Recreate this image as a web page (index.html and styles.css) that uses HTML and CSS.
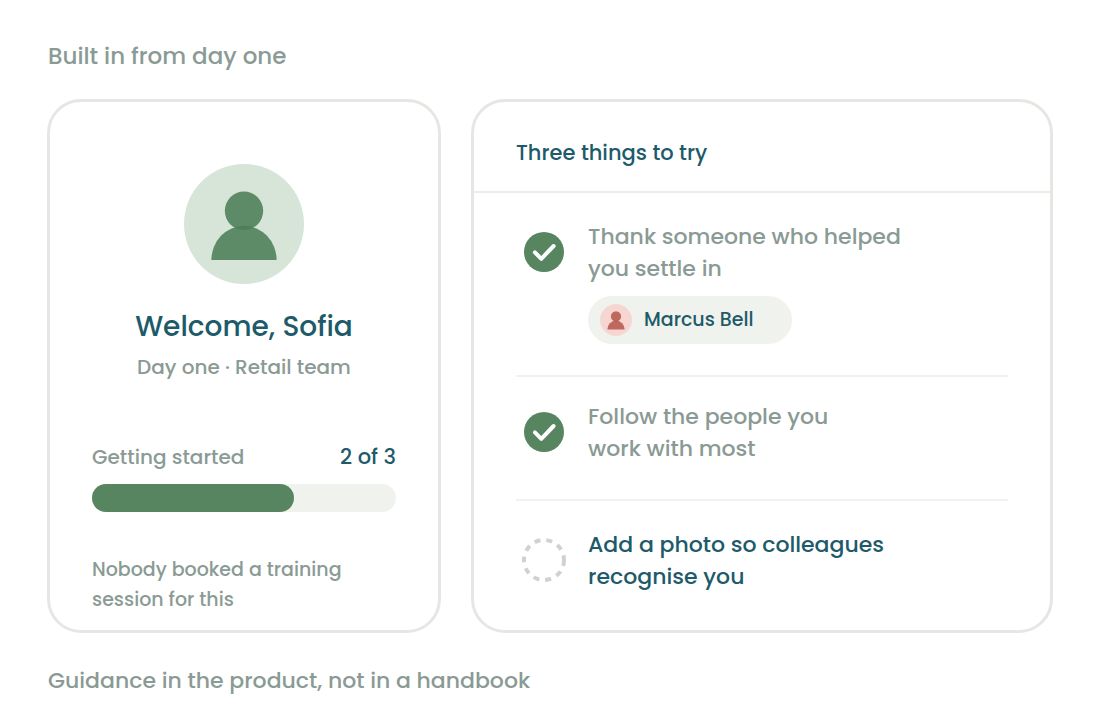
FILE: index.html
```html
<!DOCTYPE html>
<html lang="en">
<head>
  <meta charset="UTF-8" />
  <meta name="viewport" content="width=device-width, initial-scale=1" />
  <title>Built in from day one</title>
  <link rel="stylesheet" href="styles.css">
</head>
<body>

  <h1 class="page-title">Built in from day one</h1>

  <main class="cards">

    <!-- Welcome card -->
    <section class="card welcome">
      <svg class="avatar" viewBox="0 0 120 120" aria-hidden="true">
        <circle class="avatar-bg" cx="60" cy="60" r="60" />
        <circle class="avatar-fg" cx="60" cy="46.8" r="19.2" />
        <path class="avatar-fg" d="M27.4 96a32.6 34.2 0 0 1 65.2 0z" />
      </svg>
      <h2 class="name">Welcome, Sofia</h2>
      <p class="role">Day one · Retail team</p>

      <div class="progress-head">
        <span class="progress-label" id="progressLabel">Getting started</span>
        <span class="progress-count">2 of 3</span>
      </div>
      <div class="track" role="progressbar" aria-labelledby="progressLabel" aria-valuemin="0" aria-valuemax="3" aria-valuenow="2">
        <div class="fill" style="width: 66.5%"></div>
      </div>

      <p class="note">Nobody booked a training<br>session for this</p>
    </section>

    <!-- Checklist card -->
    <section class="card tasks">
      <h2 class="tasks-title">Three things to try</h2>

      <ul class="task-list">
        <li class="task done">
          <span class="tick">
            <input type="checkbox" id="thank" checked>
            <svg viewBox="0 0 44 44" aria-hidden="true">
              <circle class="tick-bg" cx="22" cy="22" r="20" />
              <path class="tick-mark" d="M12.9 22.4l6.4 6.4L31.6 16" />
            </svg>
          </span>
          <div class="task-body">
            <label for="thank">Thank someone who helped<br>you settle in</label>
            <div class="chip">
              <svg class="chip-avatar" viewBox="0 0 120 120" aria-hidden="true">
                <circle class="avatar-bg" cx="60" cy="60" r="60" />
                <circle class="avatar-fg" cx="60" cy="46.8" r="19.2" />
                <path class="avatar-fg" d="M27.4 96a32.6 34.2 0 0 1 65.2 0z" />
              </svg>
              <span>Marcus Bell</span>
            </div>
          </div>
        </li>

        <li class="task done short">
          <span class="tick">
            <input type="checkbox" id="follow" checked>
            <svg viewBox="0 0 44 44" aria-hidden="true">
              <circle class="tick-bg" cx="22" cy="22" r="20" />
              <path class="tick-mark" d="M12.9 22.4l6.4 6.4L31.6 16" />
            </svg>
          </span>
          <div class="task-body">
            <label for="follow">Follow the people you<br>work with most</label>
          </div>
        </li>

        <li class="task">
          <span class="tick">
            <input type="checkbox" id="photo">
            <svg viewBox="0 0 44 44" aria-hidden="true">
              <circle class="tick-empty" cx="22" cy="22" r="20" />
            </svg>
          </span>
          <div class="task-body">
            <label for="photo">Add a photo so colleagues<br>recognise you</label>
          </div>
        </li>
      </ul>
    </section>

  </main>

  <p class="page-foot">Guidance in the product, not in a handbook</p>

</body>
</html>
```
FILE: styles.css
```css
* {
  box-sizing: border-box;
}

body {
  margin: 0;
  padding: 40px 47px 24px;
  background-color: #ffffff;
  font-family: 'Poppins', 'Inter', sans-serif;
  font-weight: 500;
  font-size: 22px;
  line-height: 32px;
  color: #1d5a6a;
}

h1, h2, p, ul {
  margin: 0;
  padding: 0;
  font-weight: 500;
}

.page-title {
  font-size: 23px;
  padding-left: 1px;
  color: #8a9a94;
}

.page-foot {
  margin-top: 32px;
  padding-left: 1px;
  color: #8a9a94;
}

.cards {
  display: grid;
  grid-template-columns: 394fr 582fr;
  gap: 30px;
  margin-top: 27px;
}

.card {
  border: 3px solid #e4e8e3;
  border-radius: 34px;
}

/* Welcome card */
.welcome {
  display: flex;
  flex-direction: column;
  padding: 62px 42px 15px;
}

.avatar {
  width: 120px;
  height: 120px;
  align-self: center;
}

.avatar-bg {
  fill: #d7e5d9;
}

.avatar-fg {
  fill: #4c7d56;
  fill-opacity: 0.87;
}

.name {
  margin-top: 24px;
  font-size: 28px;
  line-height: 38px;
  text-align: center;
}

.role {
  margin-top: 5px;
  font-size: 20px;
  text-align: center;
  color: #8a9a94;
}

.progress-head {
  display: flex;
  justify-content: space-between;
  margin-top: 58px;
}

.progress-label {
  font-size: 20px;
  color: #8a9a94;
}

.progress-count {
  font-size: 21px;
}

.track {
  height: 28px;
  margin-top: 11px;
  border-radius: 14px;
  background-color: #f0f2ed;
}

.fill {
  height: 100%;
  border-radius: 14px;
  background-color: #578560;
}

.note {
  margin-top: 43px;
  font-size: 19px;
  line-height: 30px;
  color: #8a9a94;
}

/* Checklist card */
.tasks-title {
  padding: 35px 42px 22px;
  border-bottom: 2px solid #ebeee9;
  font-size: 21px;
  line-height: 32px;
}

.task-list {
  padding: 0 42px;
  list-style: none;
}

.task {
  display: flex;
  gap: 22px;
  padding: 28px 0 31px 6px;
}

.task + .task {
  border-top: 2px solid #f1f3f0;
}

.task.short {
  padding-top: 24px;
  padding-bottom: 34px;
}

.done label {
  color: #8a9a94;
}

.tick {
  position: relative;
  flex: none;
  width: 44px;
  height: 44px;
  margin-top: 9px;
}

.tick svg {
  display: block;
}

.tick input {
  position: absolute;
  inset: 0;
  width: 100%;
  height: 100%;
  margin: 0;
  opacity: 0;
  cursor: pointer;
}

.tick-bg {
  fill: #578560;
}

.tick-mark {
  fill: none;
  stroke: #ffffff;
  stroke-width: 4;
  stroke-linecap: round;
  stroke-linejoin: round;
}

.tick-empty {
  fill: none;
  stroke: #ccd4cd;
  stroke-width: 4;
  stroke-dasharray: 6 6;
}

.chip {
  display: flex;
  align-items: center;
  gap: 12px;
  width: 204px;
  height: 48px;
  margin-top: 11px;
  padding: 0 12px;
  border-radius: 24px;
  background-color: #f0f2ed;
  font-size: 19px;
}

.chip-avatar {
  width: 32px;
  height: 32px;
}

.chip .avatar-bg {
  fill: #f7d6d1;
}

.chip .avatar-fg {
  fill: #b6584c;
}

@media (max-width: 800px) {
  .cards {
    grid-template-columns: 1fr;
  }
}
```
